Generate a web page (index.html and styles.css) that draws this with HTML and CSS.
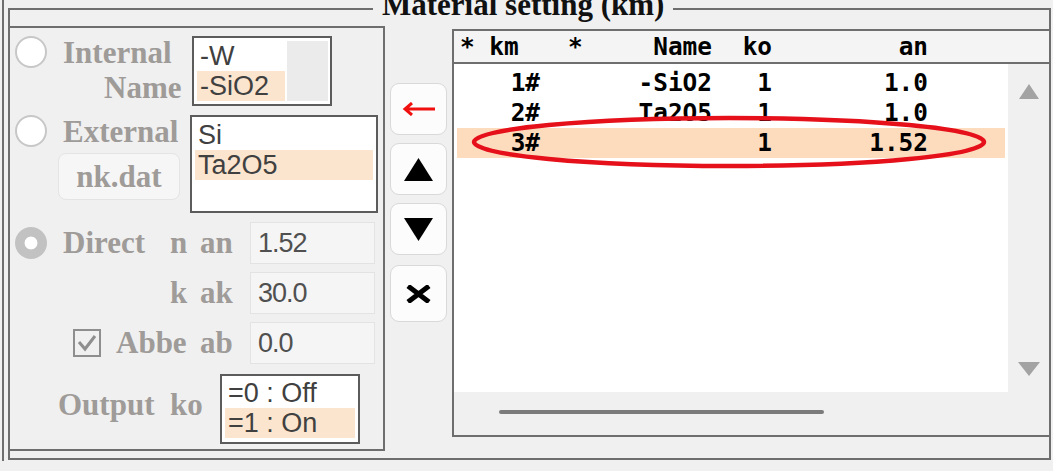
FILE: index.html
```html
<!DOCTYPE html>
<html lang="en">
<head>
<meta charset="utf-8">
<title>Material setting</title>
<link rel="stylesheet" href="styles.css">
</head>
<body>
<div class="frame">
  <div class="group">
    <div class="legend">Material setting (km)</div>

    <div class="panel">
      <div class="row row-a">
        <span class="radio"></span>
        <div class="lbl two-line">
          <div>Internal</div>
          <div class="indent">Name</div>
        </div>
        <div class="listbox lb-internal">
          <div class="lb-items">
            <div class="item">-W</div>
            <div class="item sel">-SiO2</div>
          </div>
          <div class="lb-gutter"></div>
        </div>
      </div>

      <div class="row row-b">
        <span class="radio"></span>
        <div class="ext-col">
          <div class="lbl ext-lbl">External</div>
          <div class="nk-btn">nk.dat</div>
        </div>
        <div class="listbox lb-external">
          <div class="item">Si</div>
          <div class="item sel">Ta2O5</div>
        </div>
      </div>

      <div class="row row-field row-c">
        <span class="radio radio-on"></span>
        <span class="lbl w-direct">Direct</span>
        <span class="lbl w-sym">n</span>
        <span class="lbl w-var">an</span>
        <div class="input">1.52</div>
      </div>

      <div class="row row-field">
        <span class="lbl w-sym off-k">k</span>
        <span class="lbl w-var">ak</span>
        <div class="input">30.0</div>
      </div>

      <div class="row row-field">
        <span class="check">
          <svg width="24" height="24" viewBox="0 0 24 24"><path d="M4 11 L10 18 L20 5" fill="none" stroke="#8e8e8e" stroke-width="3"/></svg>
        </span>
        <span class="lbl w-abbe">Abbe</span>
        <span class="lbl w-var">ab</span>
        <div class="input">0.0</div>
      </div>

      <div class="row row-out">
        <span class="lbl w-output">Output</span>
        <span class="lbl w-ko">ko</span>
        <div class="listbox lb-output">
          <div class="item">=0 : Off</div>
          <div class="item sel">=1 : On</div>
        </div>
      </div>
    </div>

    <div class="mid">
      <div class="btn">
        <svg width="34" height="14" viewBox="0 0 34 14"><path d="M3 7H33M10 1L3 7L10 13" fill="none" stroke="#f01010" stroke-width="3"/></svg>
      </div>
      <div class="btn">
        <svg width="29" height="23" viewBox="0 0 29 23"><polygon points="14.5,0 29,23 0,23" fill="#000"/></svg>
      </div>
      <div class="btn">
        <svg width="29" height="23" viewBox="0 0 29 23"><polygon points="0,0 29,0 14.5,23" fill="#000"/></svg>
      </div>
      <div class="btn btn-del">
        <svg width="25" height="18" viewBox="0 0 25 18"><path d="M2 1L23 17M23 1L2 17" fill="none" stroke="#000" stroke-width="5"/></svg>
      </div>
    </div>

    <div class="table">
      <div class="thead">
        <span class="h1">* km</span>
        <span class="h2"><span>*</span><span>Name</span></span>
        <span class="hr">ko</span>
        <span class="hr">an</span>
      </div>
      <div class="tbody">
        <div class="tlist">
          <div class="trow"><span>1#</span><span>-SiO2</span><span>1</span><span>1.0</span></div>
          <div class="trow"><span>2#</span><span>Ta2O5</span><span>1</span><span>1.0</span></div>
          <div class="trow sel"><span>3#</span><span></span><span>1</span><span>1.52</span></div>
        </div>
        <div class="vscroll">
          <svg width="20" height="15" viewBox="0 0 20 15"><polygon points="10,0 20,15 0,15" fill="#a3a3a3"/></svg>
          <svg width="22" height="14" viewBox="0 0 22 14"><polygon points="0,0 22,0 11,14" fill="#a3a3a3"/></svg>
        </div>
        <div class="hscroll"><div class="thumb"></div></div>
      </div>
      <svg class="ring" width="518" height="56" viewBox="0 0 518 56"><ellipse cx="259" cy="28" rx="255" ry="24" fill="none" stroke="#e5101a" stroke-width="4.5"/></svg>
    </div>
  </div>
</div>
</body>
</html>
```

FILE: styles.css
```css
* { box-sizing: border-box; }
html, body { margin: 0; padding: 0; }
body {
  width: 1053px;
  height: 471px;
  overflow: hidden;
  background: #f0f0f0;
  font-family: "Liberation Serif", serif;
}

.frame {
  margin-left: 2px;
  border-left: 2px solid #6e6e6e;
  height: 461px;
  padding-left: 4px;
  padding-top: 8px;
}

.group {
  position: relative;
  width: 1043px;
  height: 452px;
  border: 2px solid #6e6e6e;
  display: flex;
  align-items: flex-start;
}

.legend {
  position: absolute;
  top: -21px;
  left: 363px;
  padding: 0 9px;
  background: #f0f0f0;
  font: bold 31px/31px "Liberation Serif", serif;
  color: #111;
  white-space: nowrap;
}

/* left panel */
.panel {
  flex: none;
  margin-left: -2px;
  margin-top: 16px;
  width: 377px;
  height: 425px;
  border: 2px solid #6e6e6e;
  padding-left: 5px;
}
.row { display: flex; }
.row-a { margin-top: 8px; height: 70px; align-items: flex-start; }
.row-b { margin-top: 9px; height: 98px; align-items: flex-start; }
.row-field { margin-top: 8px; height: 42px; align-items: center; }
.row-c { margin-top: 9px; }
.row-out { margin-top: 10px; height: 70px; align-items: flex-start; }

.radio {
  flex: none;
  width: 32px;
  height: 32px;
  border-radius: 50%;
  background: #fff;
  border: 2px solid #c7c7c7;
}
.radio-on {
  border: none;
  background: radial-gradient(circle at center, #fff 0 6px, #c2c2c2 6.8px);
}

.lbl {
  flex: none;
  font: bold 31px/42px "Liberation Serif", serif;
  color: #9e9b99;
  white-space: nowrap;
}
.two-line { margin-left: 16px; width: 129px; line-height: 35px; margin-top: -1px; }
.indent { padding-left: 41px; }
.ext-col { flex: none; margin-left: 11px; width: 132px; }
.ext-lbl { line-height: 35px; padding-left: 5px; margin-top: -1px; }
.nk-btn {
  margin-top: 4px;
  width: 122px;
  height: 47px;
  border: 1px solid #e4e4e4;
  border-radius: 8px;
  background: #f6f6f6;
  font: bold 31px/45px "Liberation Serif", serif;
  color: #9e9b99;
  text-align: center;
}

.w-direct { margin-left: 16px; width: 107px; }
.w-sym { width: 30px; }
.w-var { width: 50px; }
.off-k { margin-left: 155px; }
.w-abbe { margin-left: 15px; width: 84px; }
.w-output { margin-left: 43px; width: 112px; margin-top: 10px; }
.w-ko { width: 50px; margin-top: 10px; }

.check {
  flex: none;
  margin-left: 58px;
  width: 28px;
  height: 28px;
  border: 2px solid #8e8e8e;
  display: flex;
  align-items: center;
  justify-content: center;
}

.input {
  flex: none;
  width: 125px;
  height: 42px;
  background: #f5f5f5;
  border: 1px solid #e3e3e3;
  font: 27px/40px "Liberation Sans", sans-serif;
  letter-spacing: -1px;
  color: #505050;
  padding-left: 7px;
}

.listbox {
  flex: none;
  border: 2px solid #5c5c5c;
  background: #fff;
  font: 27px/30px "Liberation Sans", sans-serif;
  color: #404040;
  overflow: hidden;
}
.item { height: 30px; padding-left: 3px; white-space: nowrap; }
.item.sel { background: #fbe5cf; }
.lb-internal { width: 140px; height: 70px; display: flex; gap: 2px; padding: 3px 2px 3px 3px; }
.lb-items { width: 88px; }
.lb-gutter { width: 41px; background: #ebebeb; }
.lb-external { width: 188px; height: 98px; padding: 3px; }
.lb-output { width: 140px; height: 70px; padding: 2px 3px; }

/* middle buttons */
.mid {
  flex: none;
  width: 67px;
  padding-left: 5px;
  margin-top: 73px;
  display: flex;
  flex-direction: column;
  gap: 8px;
}
.btn {
  width: 57px;
  height: 52px;
  background: #fcfcfc;
  border: 1px solid #d9d9d9;
  border-radius: 9px;
  display: flex;
  align-items: center;
  justify-content: center;
}
.btn-del { height: 57px; margin-top: 2px; }

/* table */
.table {
  flex: none;
  position: relative;
  margin-top: 19px;
  width: 597px;
  height: 408px;
  border: 2px solid #6e6e6e;
  border-right: none;
  display: flex;
  flex-direction: column;
}
.thead, .trow {
  display: grid;
  grid-template-columns: 83px 172px 60px 156px;
  font: bold 24.4px/30px "DejaVu Sans Mono", monospace;
  color: #000;
  white-space: pre;
}
.thead {
  flex: none;
  height: 33px;
  padding-left: 3px;
  align-items: center;
  border-bottom: 2px solid #6e6e6e;
  background: #f4f4f4;
}
.thead > span, .trow > span {
  display: block;
  line-height: 24px;
  height: 24px;
  transform: scaleY(1.05);
}
.h1 { padding-left: 3px; }
.h2 { display: flex !important; justify-content: space-between; padding-left: 28px; }
.hr { text-align: right; }

.tbody {
  flex: 1;
  display: grid;
  grid-template-columns: 554px 1fr;
  grid-template-rows: 328px 1fr;
}
.tlist { background: #fff; padding: 4px 3px 0; }
.trow { height: 30px; align-items: center; }
.trow > span { text-align: right; }
.trow.sel { background: #fddcbe; }

.vscroll {
  margin-top: 4px;
  background: #f0f0f0;
  display: flex;
  flex-direction: column;
  justify-content: space-between;
  align-items: center;
  padding: 16px 0;
}
.hscroll {
  grid-column: 1 / span 2;
  background: #f0f0f0;
  padding: 18px 0 0 45px;
}
.thumb { width: 325px; height: 4px; border-radius: 2px; background: #7b7b7b; }

.ring { position: absolute; left: 16px; top: 83px; }
```
